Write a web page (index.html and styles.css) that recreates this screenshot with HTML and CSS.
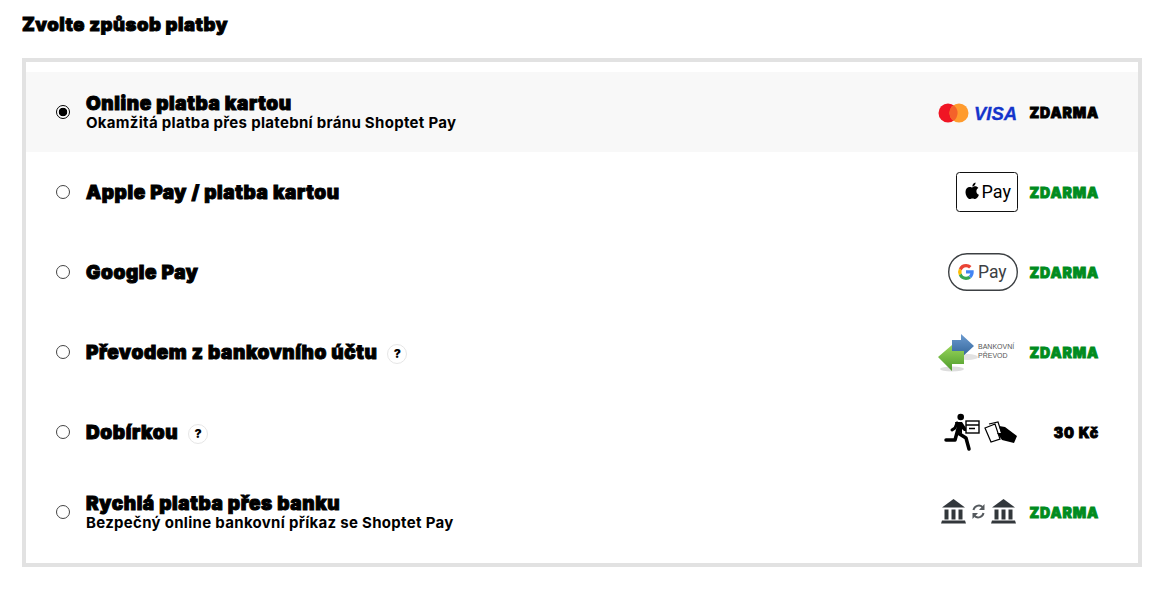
FILE: index.html
```html
<!DOCTYPE html>
<html lang="cs">
<head>
  <meta charset="UTF-8">
  <title>Způsob platby</title>
  <link rel="stylesheet" href="styles.css">
</head>
<body>

<h2 class="title">Zvolte způsob platby</h2>

<div class="methods">

  <label class="method selected">
    <input type="radio" name="pay" checked>
    <span class="info">
      <span class="name">Online platba kartou</span>
      <span class="desc">Okamžitá platba přes platební bránu Shoptet Pay</span>
    </span>
    <span class="logo">
      <svg width="80" height="20" viewBox="0 0 80 20">
        <circle cx="10" cy="11" r="9.500" fill="#f01524"/>
        <circle cx="21" cy="11" r="9.500" fill="#ff9b2e"/>
        <path d="M15.500 3.200a9.500 9.500 0 0 1 0 15.600a9.500 9.500 0 0 1 0-15.600z" fill="#f4622a"/>
        <text x="36" y="18" class="visa">VISA</text>
      </svg>
    </span>
    <span class="price">ZDARMA</span>
  </label>

  <label class="method">
    <input type="radio" name="pay">
    <span class="info"><span class="name">Apple Pay / platba kartou</span></span>
    <span class="logo">
      <svg width="62" height="40" viewBox="0 0 62 40">
        <rect x="0.500" y="0.500" width="61" height="39" rx="3" fill="#fff" stroke="#111"/>
        <path d="M16.500 15.500c-.9 0-1.600-.6-2.800-.6-2.100 0-4.200 1.800-4.200 5 0 3.600 2.500 7.100 4.400 7.100.9 0 1.400-.6 2.600-.6s1.600.6 2.600.6c1.700 0 3.300-2.500 3.800-4.200-1.500-.6-2.500-2-2.500-3.600 0-1.500.8-2.700 2-3.300-.8-1.100-2-1.700-3.300-1.700-1 0-1.900.7-2.600.7z" fill="#000"/>
        <path d="M16.300 14.500c0-2.100 1.400-3.700 3.300-3.900.1 2.200-1.400 3.800-3.300 3.900z" fill="#000"/>
        <text x="25.500" y="26" class="pay-word">Pay</text>
      </svg>
    </span>
    <span class="price free">ZDARMA</span>
  </label>

  <label class="method">
    <input type="radio" name="pay">
    <span class="info"><span class="name">Google Pay</span></span>
    <span class="logo">
      <svg width="70" height="38" viewBox="0 0 70 38">
        <rect x="0.700" y="0.700" width="68.600" height="36.600" rx="18.300" fill="#fff" stroke="#3c4043" stroke-width="1.400"/>
        <path d="M18 11a8 8 0 0 0-7.100 4.400l2.800 2.100a4.800 4.800 0 0 1 4.300-3.300c1.200 0 2.300.4 3.100 1.200l2.400-2.400A8.200 8.200 0 0 0 18 11z" fill="#ea4335"/>
        <path d="M10.900 15.400a8 8 0 0 0 0 7.200l2.800-2.200a4.800 4.800 0 0 1 0-2.900z" fill="#fbbc04"/>
        <path d="M10.900 22.600A8 8 0 0 0 18 27c2 0 3.900-.7 5.200-2l-2.700-2.100c-.7.500-1.500.8-2.500.8a4.800 4.800 0 0 1-4.300-3.300z" fill="#34a853"/>
        <path d="M25.700 19c0-.6 0-1.100-.1-1.700H18v3.200h4.300a3.700 3.700 0 0 1-1.800 2.400l2.700 2.100c1.600-1.500 2.500-3.600 2.500-6z" fill="#4285f4"/>
        <text x="30" y="25" class="pay-word gpay">Pay</text>
      </svg>
    </span>
    <span class="price free">ZDARMA</span>
  </label>

  <label class="method">
    <input type="radio" name="pay">
    <span class="info with-help"><span class="name">Převodem z bankovního účtu</span><span class="help">?</span></span>
    <span class="logo">
      <svg width="80" height="40" viewBox="0 0 80 40">
        <defs>
          <linearGradient id="blue-arrow" x1="0" y1="0" x2="0" y2="1">
            <stop offset="0" stop-color="#6c9bd0"/>
            <stop offset="1" stop-color="#2f6297"/>
          </linearGradient>
          <linearGradient id="green-arrow" x1="0" y1="0" x2="0" y2="1">
            <stop offset="0" stop-color="#9ad65c"/>
            <stop offset="1" stop-color="#4c9a2a"/>
          </linearGradient>
        </defs>
        <ellipse cx="14" cy="37" rx="12" ry="2.500" fill="#ddd"/>
        <ellipse cx="30" cy="25" rx="10" ry="3" fill="#e2e2e2"/>
        <path d="M14 8h9V2l13 12-13 12v-6h-9z" fill="url(#blue-arrow)"/>
        <path d="M0 25l14-12v6h12v13H14v7z" fill="url(#green-arrow)"/>
        <text x="40" y="17" class="bank-text">BANKOVNÍ</text>
        <text x="40" y="26" class="bank-text">PŘEVOD</text>
      </svg>
    </span>
    <span class="price free">ZDARMA</span>
  </label>

  <label class="method">
    <input type="radio" name="pay">
    <span class="info with-help"><span class="name">Dobírkou</span><span class="help">?</span></span>
    <span class="logo">
      <svg width="74" height="38" viewBox="0 0 74 38">
        <circle cx="16.700" cy="4" r="3.300" fill="#000"/>
        <path d="M11 9h7l4 6h6v3h-8l-2-2v5l-4-3z" fill="#000"/>
        <path d="M13 10l-2 5-3 2" fill="none" stroke="#000" stroke-width="3" stroke-linecap="round"/>
        <path d="M14 16l-3 11H2" fill="none" stroke="#000" stroke-width="3.500" stroke-linecap="round" stroke-linejoin="round"/>
        <path d="M14 20l8 5 3 11" fill="none" stroke="#000" stroke-width="3.500" stroke-linecap="round" stroke-linejoin="round"/>
        <rect x="22" y="8" width="13" height="12" fill="#fff" stroke="#000" stroke-width="1.400"/>
        <path d="M22 12h13M25 15.500h6" stroke="#000" stroke-width="1.400"/>
        <path d="M41 15l10-4 5 15-9 3z" fill="#fff" stroke="#000" stroke-width="1.200"/>
        <path d="M45 11l9-2 4 12" fill="none" stroke="#000" stroke-width="1.200"/>
        <path d="M55 13l6 1 12 9-3 7-12-3-5-7 4 0z" fill="#000"/>
      </svg>
    </span>
    <span class="price">30 Kč</span>
  </label>

  <label class="method">
    <input type="radio" name="pay">
    <span class="info">
      <span class="name">Rychlá platba přes banku</span>
      <span class="desc">Bezpečný online bankovní příkaz se Shoptet Pay</span>
    </span>
    <span class="logo">
      <svg width="77" height="26" viewBox="0 0 77 26">
        <defs>
          <g id="bank">
            <path d="M12.500 0L24 8.500H1z" fill="#32373b"/>
            <path d="M3.500 10.500h4v10h-4zM10.500 10.500h4v10h-4zM17.500 10.500h4v10h-4z" fill="#32373b"/>
            <path d="M1 21.500h23l1 3H0z" fill="#32373b"/>
          </g>
        </defs>
        <use href="#bank"/>
        <use href="#bank" x="50"/>
        <path d="M32.500 11a5.500 5.500 0 0 1 9-3M42.500 14a5.500 5.500 0 0 1-9 3" fill="none" stroke="#555a5e" stroke-width="2"/>
        <path d="M43.500 5v6h-5.500zM31.500 20v-6h5.500z" fill="#555a5e"/>
      </svg>
    </span>
    <span class="price free">ZDARMA</span>
  </label>

</div>

</body>
</html>
```

FILE: styles.css
```css
body {
  margin: 0;
  padding: 12px 26px 0 22px;
  font-family: Inter, Lato, sans-serif;
  color: #000;
  background-color: #fff;
}

.title {
  margin: 0 0 22px;
  font-size: 18.500px;
  line-height: 24px;
  font-weight: 900;
  letter-spacing: 0.5px;
  -webkit-text-stroke: 0.9px #000;
}

.methods {
  border: 4px solid #e2e2e2;
  padding: 10px 0 11px;
}

.method {
  display: flex;
  align-items: center;
  height: 80px;
  padding: 0 40px 0 30px;
  cursor: pointer;
}

.method.selected {
  background-color: #f8f8f8;
}

.method input {
  width: 14px;
  height: 14px;
  margin: 0 16px 0 0;
  flex-shrink: 0;
  appearance: none;
  border: 1px solid #444;
  border-radius: 50%;
  background-color: #fff;
}

.method input:checked {
  border-color: #000;
  background: radial-gradient(circle, #000 0, #000 4px, #fff 4.600px);
}

.info {
  flex: 1;
  display: block;
}

.info.with-help {
  display: flex;
  align-items: center;
}

.name {
  font-size: 19px;
  line-height: 21px;
  font-weight: 900;
  letter-spacing: 0.6px;
  -webkit-text-stroke: 1px #000;
}

.desc {
  display: block;
  font-size: 15px;
  line-height: 17px;
  font-weight: 700;
  letter-spacing: 0.3px;
}

.help {
  width: 18px;
  height: 18px;
  margin: 3px 0 0 10px;
  border: 1px solid #e6e6e6;
  border-radius: 50%;
  font-size: 12px;
  line-height: 18px;
  font-weight: 900;
  text-align: center;
}

.logo {
  display: flex;
  justify-content: flex-end;
  align-items: center;
}

.logo svg {
  overflow: visible;
}

.price {
  width: 72px;
  margin: 0 -1px 0 9px;
  padding-top: 1px;
  text-align: right;
  font-size: 14px;
  font-weight: 900;
  letter-spacing: 0.9px;
  white-space: nowrap;
  -webkit-text-stroke: 0.9px currentColor;
}

.price.free {
  color: #008c1e;
}

.visa {
  font-family: "Liberation Sans", sans-serif;
  font-size: 18.500px;
  font-weight: 700;
  font-style: italic;
  fill: #1434cb;
  stroke: #1434cb;
  stroke-width: 0.3px;
}

.pay-word {
  font-family: Roboto, sans-serif;
  font-size: 18px;
  fill: #000;
}

.pay-word.gpay {
  font-size: 17.500px;
  fill: #3c4043;
}

.bank-text {
  font-family: "Liberation Sans", sans-serif;
  font-size: 7px;
  fill: #555;
}
```
